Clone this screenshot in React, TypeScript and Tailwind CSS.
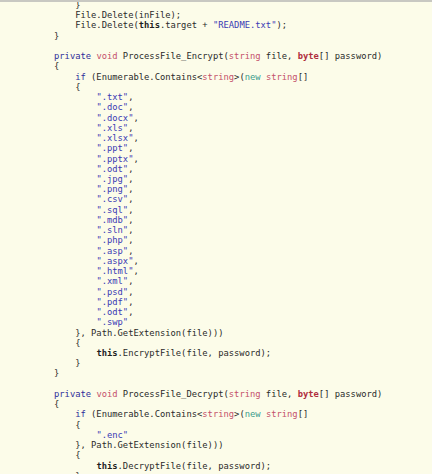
import React from "react";

type Tok = [string, string?];

const KW = "text-[#2e2e9a]";
const TY = "text-[#c4506a]";
const BT = "text-[#b02c3c] font-bold";
const NW = "text-[#3c9c8c]";
const ST = "text-[#3a3ab4]";
const TH = "font-bold text-[#1e1e1e]";

const exts = [
  ".txt", ".doc", ".docx", ".xls", ".xlsx", ".ppt", ".pptx", ".odt", ".jpg",
  ".png", ".csv", ".sql", ".mdb", ".sln", ".php", ".asp", ".aspx", ".html",
  ".xml", ".psd", ".pdf", ".odt", ".swp",
];

function header(name: string): Tok[][] {
  return [
    [["private", KW], [" "], ["void", TY], [` ${name}(`], ["string", TY], [" file, "], ["byte", BT], ["[] password)"]],
    [["{"]],
    [["    "], ["if", KW], [" (Enumerable.Contains<"], ["string", TY], [">("], ["new", NW], [" "], ["string", TY], ["[]"]],
    [["    {"]],
  ];
}

const lines: Tok[][] = [
  [["    }"]],
  [["    File.Delete(inFile);"]],
  [["    File.Delete("], ["this", TH], [".target + "], ['"README.txt"', ST], [");"]],
  [["}"]],
  [[""]],
  ...header("ProcessFile_Encrypt"),
  ...exts.map((e, i): Tok[] => [["        "], [`"${e}"`, ST], [i === exts.length - 1 ? "" : ","]]),
  [["    }, Path.GetExtension(file)))"]],
  [["    {"]],
  [["        "], ["this", TH], [".EncryptFile(file, password);"]],
  [["    }"]],
  [["}"]],
  [[""]],
  ...header("ProcessFile_Decrypt"),
  [["        "], ['".enc"', ST]],
  [["    }, Path.GetExtension(file)))"]],
  [["    {"]],
  [["        "], ["this", TH], [".DecryptFile(file, password);"]],
  [["    }"]],
];

export default function App() {
  return (
    <div className="w-[432px] h-[474px] overflow-hidden bg-[#fcfce9] border-t-2 border-[#c8c8c2]">
      <pre className="pl-[54px] -mt-[2px] font-['DejaVu_Sans_Mono',monospace] text-[8.8px] leading-[10.24px] text-[#2a2a2a] whitespace-pre">
        {lines.map((l, i) => (
          <div key={i} className="h-[10.24px]">
            {l.map(([t, c], j) => (
              <span key={j} className={c}>
                {t}
              </span>
            ))}
          </div>
        ))}
      </pre>
    </div>
  );
}
